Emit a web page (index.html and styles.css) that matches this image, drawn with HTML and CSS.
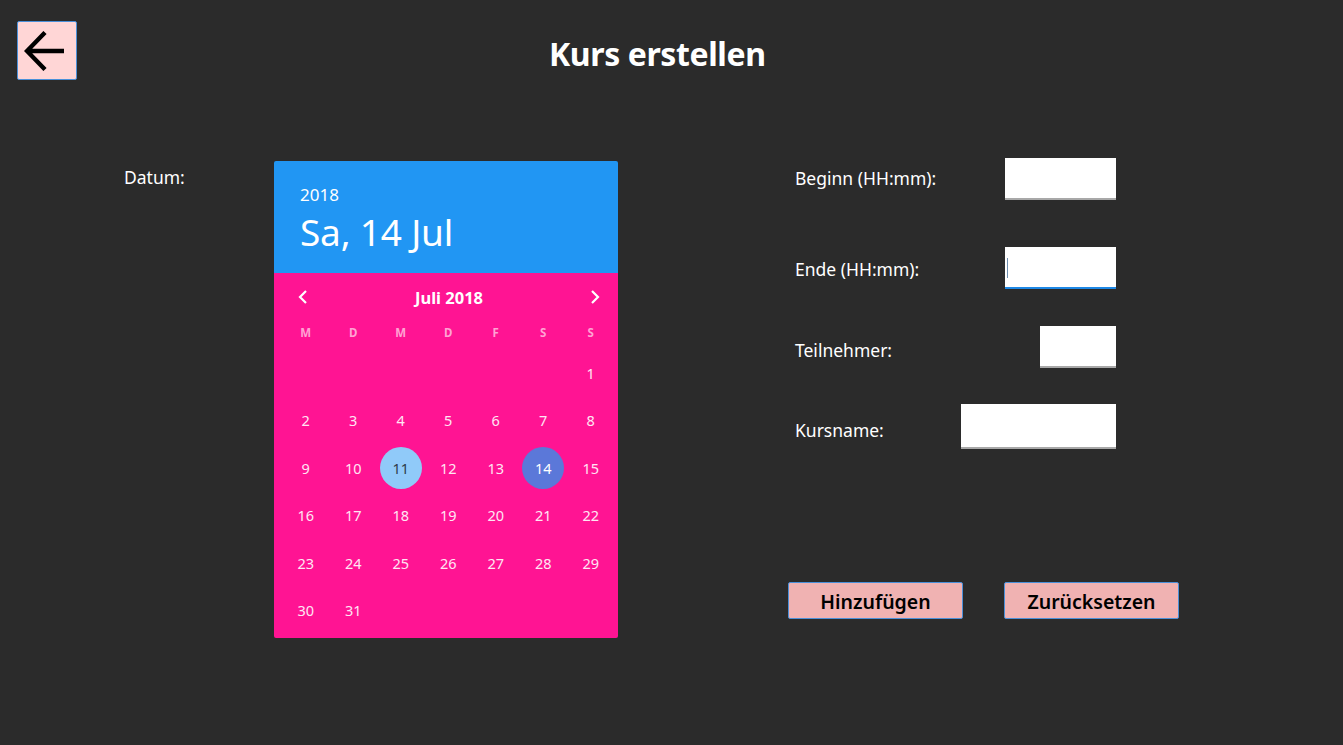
FILE: index.html
```html
<!DOCTYPE html>
<html lang="de">
<head>
<meta charset="utf-8">
<title>Kurs erstellen</title>
<link rel="stylesheet" href="styles.css">
</head>
<body>
<header class="topbar">
  <button class="back-btn" aria-label="Zurück">
    <svg width="40" height="40" viewBox="0 0 40 40"><path d="M21 1.5 L3 20 L21 38.5 M3 20 L40 20" fill="none" stroke="#000" stroke-width="4.4" stroke-linejoin="miter"/></svg>
  </button>
  <h1 class="title">Kurs erstellen</h1>
</header>

<main class="content">
  <div class="datum-label">Datum:</div>

  <section class="calendar">
    <div class="cal-head">
      <div class="cal-year">2018</div>
      <div class="cal-date">Sa, 14 Jul</div>
    </div>
    <div class="cal-body">
      <div class="cal-nav">
        <svg class="chev" width="10" height="14" viewBox="0 0 10 14"><path d="M8 1 L2 7 L8 13" fill="none" stroke="#fff" stroke-width="2.2"/></svg>
        <span class="month">Juli 2018</span>
        <svg class="chev" width="10" height="14" viewBox="0 0 10 14"><path d="M2 1 L8 7 L2 13" fill="none" stroke="#fff" stroke-width="2.2"/></svg>
      </div>
      <div class="weekdays">
        <span>M</span><span>D</span><span>M</span><span>D</span><span>F</span><span>S</span><span>S</span>
      </div>
      <div class="days">
        <span></span><span></span><span></span><span></span><span></span><span></span><span>1</span>
        <span>2</span><span>3</span><span>4</span><span>5</span><span>6</span><span>7</span><span>8</span>
        <span>9</span><span>10</span><span class="today">11</span><span>12</span><span>13</span><span class="selected">14</span><span>15</span>
        <span>16</span><span>17</span><span>18</span><span>19</span><span>20</span><span>21</span><span>22</span>
        <span>23</span><span>24</span><span>25</span><span>26</span><span>27</span><span>28</span><span>29</span>
        <span>30</span><span>31</span>
      </div>
    </div>
  </section>

  <section class="form">
    <div class="row row-beginn">
      <label>Beginn (HH:mm):</label>
      <div class="field w111"></div>
    </div>
    <div class="row row-ende">
      <label>Ende (HH:mm):</label>
      <div class="field w111 focused"><span class="caret"></span></div>
    </div>
    <div class="row row-teil">
      <label>Teilnehmer:</label>
      <div class="field w76"></div>
    </div>
    <div class="row row-name">
      <label>Kursname:</label>
      <div class="field w155 tall"></div>
    </div>
    <div class="buttons">
      <button class="btn">Hinzufügen</button>
      <button class="btn">Zurücksetzen</button>
    </div>
  </section>
</main>
</body>
</html>
```

FILE: styles.css
```css
* { box-sizing: border-box; }
html, body {
  margin: 0;
  padding: 0;
  background: #2b2b2b;
  color: #fff;
  font-family: "Noto Sans", "Open Sans", sans-serif;
  width: 1343px;
  height: 745px;
  overflow: hidden;
}

.topbar {
  display: flex;
  align-items: flex-start;
  padding: 21px 0 0 17px;
  gap: 472px;
}
.back-btn {
  width: 60px;
  height: 59px;
  padding: 0;
  margin: 0;
  background: #ffd6d6;
  border: 1px solid #4a90d9;
  border-radius: 2px;
  display: flex;
  align-items: center;
  justify-content: center;
  flex-shrink: 0;
}
.back-btn svg { display: block; margin-right: 6px; }
.title {
  margin: 17px 0 0 0;
  font-size: 32px;
  font-weight: 700;
  letter-spacing: -0.4px;
  line-height: 32px;
  color: #fff;
}

.content {
  display: flex;
  align-items: flex-start;
  padding-left: 124px;
  margin-top: 78px;
}
.datum-label {
  width: 150px;
  flex-shrink: 0;
  font-size: 17.5px;
  margin-top: 7px;
}

.calendar {
  width: 344px;
  flex-shrink: 0;
  margin-top: 3px;
  border-radius: 2px;
  overflow: hidden;
}
.cal-head {
  background: #2196f3;
  height: 112px;
  padding: 23px 0 0 26px;
}
.cal-year {
  font-size: 17px;
  line-height: 22px;
}
.cal-date {
  font-size: 37px;
  line-height: 46px;
  margin-top: 3px;
  letter-spacing: -0.2px;
}
.cal-body {
  background: #ff1493;
  height: 365px;
  padding: 0 3px 0 8px;
}
.cal-nav {
  height: 48px;
  display: flex;
  align-items: center;
  justify-content: space-between;
  padding: 0 15px 0 16px;
}
.chev { display: block; }
.month {
  font-size: 16.5px;
  font-weight: 700;
  margin-left: 0;
}
.weekdays, .days {
  display: grid;
  grid-template-columns: repeat(7, 47.5px);
}
.weekdays {
  height: 24px;
  margin-bottom: 4px;
}
.weekdays span {
  text-align: center;
  font-size: 11.5px;
  font-weight: 700;
  color: #ffa3d4;
  line-height: 24px;
}
.days span {
  height: 47.5px;
  display: flex;
  align-items: center;
  justify-content: center;
  font-size: 14.5px;
  color: #ffe6f3;
}
.days .today, .days .selected {
  position: relative;
  isolation: isolate;
}
.days .today::before, .days .selected::before {
  content: "";
  position: absolute;
  width: 42px;
  height: 42px;
  border-radius: 50%;
  left: 50%;
  top: 50%;
  transform: translate(-50%, -50%);
  z-index: -1;
}
.days .today::before { background: #90caf9; }
.days .selected::before { background: #5b78d9; }
.days .today { color: #2e3a4a; }
.days .selected { color: #fff; }

.form {
  margin-left: 177px;
  width: 321px;
  flex-shrink: 0;
  display: flex;
  flex-direction: column;
}
.row {
  display: flex;
  align-items: center;
  justify-content: space-between;
}
.row label {
  font-size: 17.5px;
}
.row-beginn label { margin-top: -3px; }
.field {
  height: 42px;
  background: #fff;
  border-bottom: 2px solid #a8a8a8;
  position: relative;
  flex-shrink: 0;
}
.field.focused { border-bottom-color: #1e88e5; }
.field.tall { height: 45px; }
.w111 { width: 111px; }
.w76 { width: 76px; }
.w155 { width: 155px; }
.caret {
  position: absolute;
  left: 2px;
  top: 11px;
  width: 1px;
  height: 20px;
  background: #6f8fb0;
}
.row-ende { margin-top: 47px; }
.row-ende label { margin-top: 1px; }
.row-teil { margin-top: 37px; }
.row-teil label { margin-top: 5px; }
.row-name { margin-top: 36px; }
.row-name label { margin-top: 7px; }

.buttons {
  display: flex;
  gap: 41px;
  margin-left: -7px;
  margin-top: 133px;
}
.btn {
  width: 175px;
  height: 37px;
  flex-shrink: 0;
  background: #f0b2b2;
  border: 1px solid #4a90d9;
  border-radius: 2px;
  font-family: "Noto Sans", "Open Sans", sans-serif;
  font-size: 19.5px;
  font-weight: 600;
  color: #000;
  padding: 3px 0 0 0;
  line-height: 32px;
}
```
